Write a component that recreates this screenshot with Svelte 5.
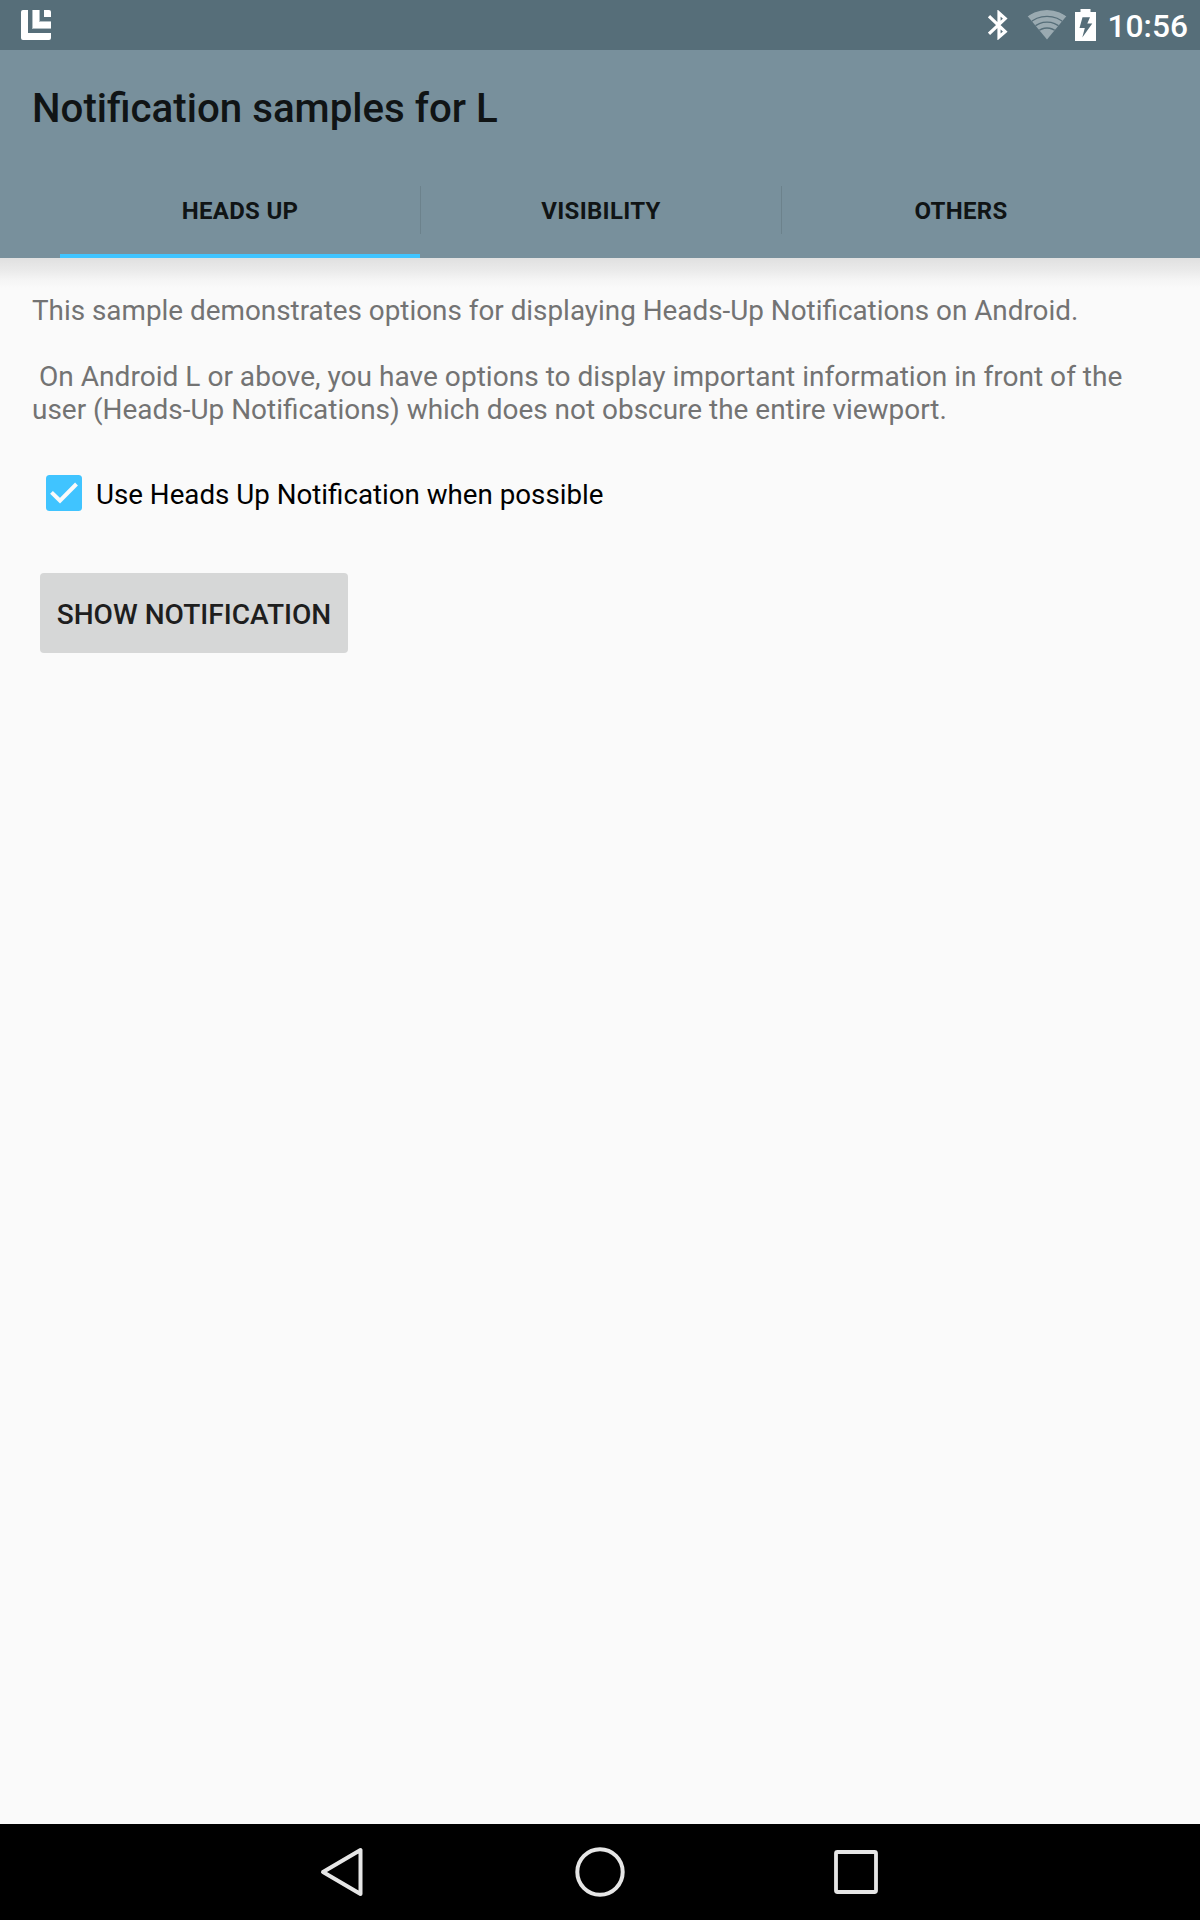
<script>
  const tabs = ['Heads up', 'Visibility', 'Others'];
  let active = $state(0);
  let useHeadsUp = $state(true);
</script>

<div class="screen">
  <div class="status">
    <svg class="app-icon" width="30" height="30" viewBox="0 0 30 30">
      <path fill="#fff" d="M2 0h5v23h23v5a2 2 0 0 1-2 2H2a2 2 0 0 1-2-2V2a2 2 0 0 1 2-2z" />
      <path fill="#fff" d="M12 0h6v12h12v6H12z" />
      <path fill="#fff" d="M23 0h5a2 2 0 0 1 2 2v5h-7z" />
      <path fill="#b4c0c5" d="M11 0h1v18h18v1H11zM18 0h1v11h11v1H18z" />
    </svg>
    <div class="tray">
      <svg class="bt" width="20" height="30" viewBox="0 0 20 30">
        <path fill="none" stroke="#fff" stroke-width="3.2" d="M1 6.200L17.200 21.600L11 27V3L17.200 8.600L1 23.800" />
      </svg>
      <svg class="wifi" width="40" height="30" viewBox="0 0 40 30">
        <defs>
          <clipPath id="fan"><path d="M20 29.500L.5 6Q20-8 39.500 6z" /></clipPath>
        </defs>
        <g clip-path="url(#fan)">
          <circle cx="20" cy="33" r="33" fill="#9aaab1" />
          <g fill="none" stroke="#566e79" stroke-width="1.300">
            <circle cx="20" cy="32.500" r="26.200" />
            <circle cx="20" cy="32" r="19.800" />
            <circle cx="20" cy="31.500" r="13.500" />
          </g>
        </g>
      </svg>
      <svg class="battery" width="21" height="32" viewBox="0 0 21 32">
        <path fill="#fff" d="M5.500 0h10v3H21v29H0V3h5.500z" />
        <path fill="#566e79" d="M7.500 8.300H15L12.300 14.500H17.300L7.300 28.500L9.800 19H4.500z" />
      </svg>
      <span class="clock">10:56</span>
    </div>
  </div>

  <header>
    <h1>Notification samples for L</h1>
    <nav>
      {#each tabs as tab, i}
        <button class="tab" class:active={active === i} onclick={() => (active = i)}>{tab}</button>
        {#if i < tabs.length - 1}<i class="divider"></i>{/if}
      {/each}
    </nav>
  </header>

  <main>
    <p class="intro">This sample demonstrates options for displaying Heads-Up Notifications on Android.</p>
    <p class="detail">{' On Android L or above, you have options to display important information in front of the'}</p>
    <p class="detail-end">user (Heads-Up Notifications) which does not obscure the entire viewport.</p>
    <button class="option" role="checkbox" aria-checked={useHeadsUp} onclick={() => (useHeadsUp = !useHeadsUp)}>
      <svg width="36" height="36" viewBox="0 0 36 36">
        <rect width="36" height="36" rx="3.500" fill="#40c4ff" />
        {#if useHeadsUp}
          <path fill="none" stroke="#fafafa" stroke-width="4" d="M5.500 17.300L14 25.700L30.500 9" />
        {/if}
      </svg>
      <span>Use Heads Up Notification when possible</span>
    </button>
    <button class="show">Show notification</button>
  </main>

  <footer>
    <svg width="48" height="52" viewBox="0 0 48 52">
      <path fill="none" stroke="#e6e6e6" stroke-width="4" stroke-linejoin="round" d="M5 26L42.500 4V48z" />
    </svg>
    <svg width="52" height="52" viewBox="0 0 52 52">
      <circle cx="27" cy="26" r="22.700" fill="none" stroke="#e6e6e6" stroke-width="4" />
    </svg>
    <svg width="48" height="52" viewBox="0 0 48 52">
      <rect x="4" y="6" width="40" height="40" rx="1.500" fill="none" stroke="#e6e6e6" stroke-width="3.800" />
    </svg>
  </footer>
</div>

<style>
  :global(body) {
    margin: 0;
  }
  .screen {
    width: 1200px;
    height: 1920px;
    display: flex;
    flex-direction: column;
    background: #fafafa;
    font-family: Roboto, 'Liberation Sans', sans-serif;
  }
  svg {
    display: block;
    flex: none;
  }
  button {
    border: 0;
    margin: 0;
    padding: 0;
    background: none;
    font: inherit;
  }
  .status {
    height: 50px;
    box-sizing: border-box;
    padding: 0 12px 0 21px;
    display: flex;
    justify-content: space-between;
    align-items: center;
    background: #566e79;
  }
  .tray {
    display: flex;
    align-items: center;
  }
  .wifi {
    margin: 0 8px 0 19px;
  }
  .battery {
    margin-right: 12px;
  }
  .clock {
    font-size: 31.7px;
    line-height: 38px;
    font-weight: 500;
    color: #fff;
    padding-top: 3px;
  }
  header {
    height: 208px;
    background: #78909c;
    display: flex;
    flex-direction: column;
  }
  h1 {
    margin: 0;
    height: 112px;
    padding-left: 32px;
    font-size: 40.25px;
    line-height: 118px;
    font-weight: 500;
    color: #101415;
  }
  nav {
    flex: 1;
    display: grid;
    grid-template-columns: 360px 1px 360px 1px 360px;
    align-items: center;
    padding-left: 60px;
  }
  .tab {
    height: 96px;
    box-sizing: border-box;
    border-bottom: 4px solid transparent;
    padding-top: 5px;
    font-size: 24px;
    font-weight: 700;
    letter-spacing: 0.3px;
    text-transform: uppercase;
    color: #101415;
  }
  .tab:last-child {
    padding-right: 2px;
  }
  .tab.active {
    border-color: #40c4ff;
  }
  .divider {
    width: 1px;
    height: 48px;
    background: #6c828c;
  }
  main {
    flex: 1;
    display: flex;
    flex-direction: column;
    align-items: flex-start;
    padding: 36px 32px 0;
    font-size: 28px;
    background: linear-gradient(#e0e0e0, #eaeaea 12px, #f5f5f5 22px, #fafafa 30px);
  }
  p {
    margin: 0;
    height: 33px;
    line-height: 33px;
    white-space: pre;
    color: #737373;
  }
  .intro {
    margin-bottom: 33px;
    font-size: 27.85px;
  }
  .detail {
    font-size: 28.08px;
  }
  .detail-end {
    font-size: 27.94px;
  }
  .option {
    display: flex;
    align-items: center;
    gap: 14px;
    margin: 49px 0 0 14px;
    height: 36px;
    line-height: 36px;
    color: #000;
  }
  .option span {
    padding-top: 4px;
    font-size: 27.72px;
  }
  .show {
    margin: 62px 0 0 8px;
    width: 308px;
    height: 80px;
    border-radius: 4px;
    background: #d6d7d7;
    padding-top: 2px;
    font-size: 28.08px;
    font-weight: 500;
    text-transform: uppercase;
    color: #1e1e1e;
  }
  footer {
    height: 96px;
    box-sizing: border-box;
    padding: 0 320px 0 318px;
    background: #000;
    display: flex;
    justify-content: space-between;
    align-items: center;
  }
</style>
